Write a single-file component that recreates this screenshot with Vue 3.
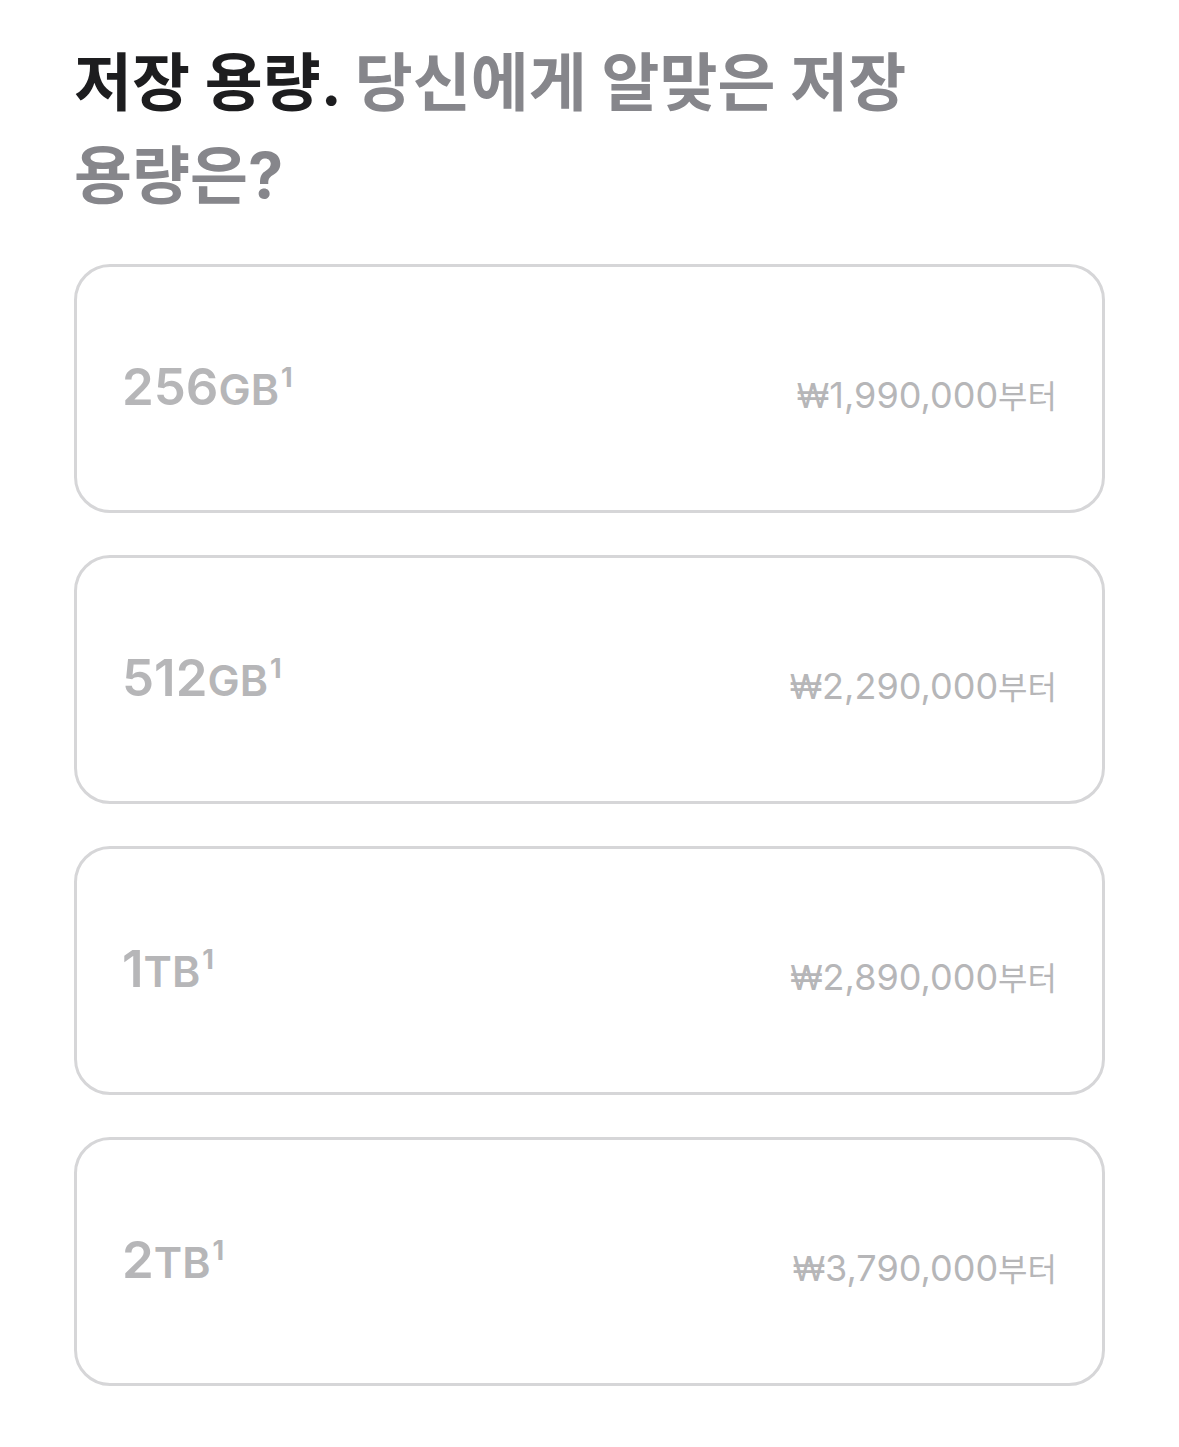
<template>
  <main class="storage">
    <fieldset class="group">
      <legend class="heading">
        <span class="heading-strong">저장 용량.</span> 당신에게 알맞은 저장 용량은?
      </legend>
      <div class="options">
        <label v-for="item in options" :key="item.id" class="option" :for="item.id">
          <input
            :id="item.id"
            v-model="selected"
            class="option-input"
            type="radio"
            name="storage"
            :value="item.id"
            disabled
          />
          <span class="capacity">{{ item.size }}<span class="unit">{{ item.unit }}</span><sup class="footnote">1</sup></span>
          <span class="price"><span class="currency">₩</span>{{ item.price }}<span class="suffix">부터</span></span>
        </label>
      </div>
    </fieldset>
  </main>
</template>

<script setup>
import { ref } from 'vue'

const selected = ref('')

const options = [
  { id: '256gb', size: '256', unit: 'GB', price: '1,990,000' },
  { id: '512gb', size: '512', unit: 'GB', price: '2,290,000' },
  { id: '1tb', size: '1', unit: 'TB', price: '2,890,000' },
  { id: '2tb', size: '2', unit: 'TB', price: '3,790,000' }
]
</script>

<style>
body {
  background: #fff;
}
</style>

<style scoped>
.storage {
  padding: 36px 74px 60px;
  font-family: Inter, 'Noto Sans CJK KR', sans-serif;
}

.group {
  min-width: 0;
  margin: 0;
  padding: 0;
  border: 0;
}

.heading {
  max-width: 860px;
  margin-bottom: 42px;
  padding: 0;
  color: #86868b;
  font-size: 63px;
  font-weight: 700;
  line-height: 93px;
  word-break: keep-all;
}

.heading-strong {
  color: #1d1d1f;
}

.options {
  display: flex;
  flex-direction: column;
  gap: 42px;
}

.option {
  position: relative;
  display: flex;
  align-items: center;
  justify-content: space-between;
  box-sizing: border-box;
  min-height: 249px;
  padding: 42px 45px;
  border: 3px solid #d6d6d8;
  border-radius: 36px;
  color: #b6b6b8;
}

.option-input {
  position: absolute;
  inset: 0;
  width: 100%;
  height: 100%;
  margin: 0;
  opacity: 0;
}

.capacity {
  padding-bottom: 2px;
  font-size: 51px;
  font-weight: 600;
  line-height: 60px;
}

.unit {
  font-size: 43px;
}

.footnote {
  margin-left: 2px;
  font-size: 27px;
  font-weight: 700;
  line-height: 1;
}

.price {
  padding-top: 14px;
  font-size: 36px;
  line-height: 48px;
}

.currency {
  font-size: 34px;
}

.suffix {
  font-size: 32px;
}
</style>
